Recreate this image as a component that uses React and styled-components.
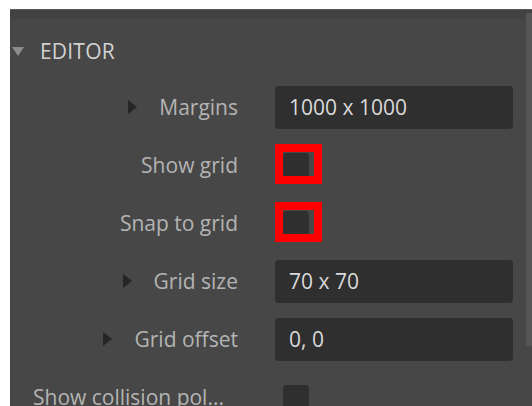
import React from 'react';
import styled, { createGlobalStyle } from 'styled-components';

const GlobalStyle = createGlobalStyle`
  html, body {
    margin: 0;
    padding: 0;
    background: #ffffff;
  }
  body {
    font-family: "Open Sans", "Noto Sans", sans-serif;
  }
`;

const Page = styled.div`
  width: 532px;
  height: 406px;
  padding: 9px 0 0 10px;
  box-sizing: border-box;
  overflow: hidden;
`;

const Panel = styled.div`
  position: relative;
  height: 100%;
  background: #474747;
  display: flex;
  flex-direction: column;
  border-top: 1px solid #5a5a5a;
  overflow: hidden;
`;

const TopStrip = styled.div`
  height: 9px;
  background: #424242;
  flex: none;
`;

const Scrollbar = styled.div`
  position: absolute;
  right: 0;
  top: 3px;
  width: 6px;
  height: 333px;
  background: #565656;
`;

const SectionHeader = styled.div`
  display: flex;
  align-items: center;
  height: 36px;
  margin: 14px 0 9px;
  padding-left: 2px;
  color: #d2d2d2;
  font-size: 21px;
  font-weight: 500;
  letter-spacing: 0.2px;
  flex: none;
`;

const Caret = styled.span`
  width: 0;
  height: 0;
  flex: none;
  ${({ $open }) =>
    $open
      ? `
    border-left: 6px solid transparent;
    border-right: 6px solid transparent;
    border-top: 9px solid #8c8c8c;
  `
      : `
    border-top: 7px solid transparent;
    border-bottom: 7px solid transparent;
    border-left: 9px solid #262626;
  `}
`;

const HeaderTitle = styled.span`
  margin-left: 16px;
`;

const Row = styled.div`
  display: grid;
  grid-template-columns: 228px 238px;
  column-gap: 37px;
  align-items: center;
  height: 58px;
  flex: none;
`;

const Label = styled.div`
  display: flex;
  align-items: center;
  justify-content: flex-end;
  gap: 22px;
  color: #b4b4b4;
  font-size: 21px;
  white-space: nowrap;
  overflow: hidden;
  text-overflow: ellipsis;
  ${({ $wide }) => $wide && `justify-content: flex-start; padding-left: 23px; overflow: visible;`}
`;

const Input = styled.div`
  height: 43px;
  background: #2f2f2f;
  border-radius: 4px;
  display: flex;
  align-items: center;
  padding-left: 14px;
  color: #dadada;
  font-size: 21px;
`;

const CheckCell = styled.div`
  position: relative;
  display: flex;
  align-items: center;
  padding-left: 8px;
`;

const Checkbox = styled.div`
  width: 26px;
  height: 24px;
  border-radius: 4px;
  background: #2f2f2f;
`;

const Highlight = styled.div`
  position: absolute;
  left: 0;
  top: 50%;
  margin-top: -21px;
  width: 47px;
  height: 40px;
  border: 8px solid #ff0000;
  box-sizing: border-box;
`;

const rows = [
  { label: 'Margins', value: '1000 x 1000', expandable: true },
  { label: 'Show grid', check: true, marked: true },
  { label: 'Snap to grid', check: true, marked: true },
  { label: 'Grid size', value: '70 x 70', expandable: true },
  { label: 'Grid offset', value: '0, 0', expandable: true },
  { label: 'Show collision pol...', check: true, wide: true },
];

export default function App() {
  return (
    <>
      <GlobalStyle />
      <Page>
        <Panel>
          <TopStrip />
          <Scrollbar />
          <SectionHeader>
            <Caret $open />
            <HeaderTitle>EDITOR</HeaderTitle>
          </SectionHeader>
          {rows.map((r) => (
            <Row key={r.label}>
              <Label $wide={r.wide}>
                {r.expandable && <Caret />}
                <span>{r.label}</span>
              </Label>
              {r.check ? (
                <CheckCell>
                  <Checkbox />
                  {r.marked && <Highlight />}
                </CheckCell>
              ) : (
                <Input>{r.value}</Input>
              )}
            </Row>
          ))}
        </Panel>
      </Page>
    </>
  );
}
